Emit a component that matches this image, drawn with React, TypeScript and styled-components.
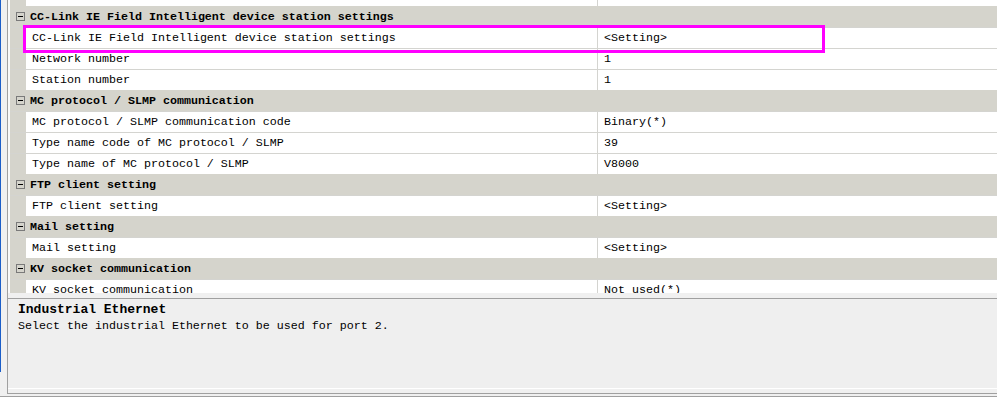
import React from 'react'
import styled, { createGlobalStyle } from 'styled-components'

const GlobalStyle = createGlobalStyle`
  html, body {
    margin: 0;
    padding: 0;
    background: #f0f0f0;
    overflow: hidden;
  }
  #root {
    width: 997px;
    height: 397px;
  }
`

const mono = `'Liberation Mono', 'Courier New', monospace`

const Page = styled.div`
  display: flex;
  width: 997px;
  height: 396px;
  border-bottom: 1px solid #a0a0a0;
  background: #f0f0f0;
  font-family: ${mono};
  font-size: 11.67px;
  color: #000;
`

const SideEdge = styled.div`
  width: 7px;
  flex: none;
  display: flex;
  flex-direction: column;
`

const BlueRail = styled.div`
  width: 1px;
  height: 372px;
  background: #1a5dc8;
`

const Frame = styled.div`
  flex: 1;
  display: flex;
  flex-direction: column;
  height: 391px;
  border-left: 1px solid #a0a0a0;
  border-bottom: 1px solid #a0a0a0;
  padding-bottom: 2px;
  box-sizing: content-box;
`

const GridPane = styled.div`
  position: relative;
  height: 293px;
  flex: none;
  overflow: hidden;
  border-left: 2px solid #fafafa;
  background: #fff;
`

const CategoryRow = styled.div`
  display: flex;
  align-items: center;
  height: 21px;
  background: #d5d4cc;
  font-weight: bold;
`

const Toggle = styled.span`
  width: 7px;
  height: 7px;
  margin: 0 5px 0 6px;
  border: 1px solid #7a7a7a;
  position: relative;
  flex: none;

  &::after {
    content: '';
    position: absolute;
    left: 1px;
    right: 1px;
    top: 3px;
    height: 1px;
    background: #000;
  }
`

const ItemRow = styled.div<{ $clip?: number }>`
  display: flex;
  height: 20px;
  border-top: 1px solid #d4d4d0;
  background: #d5d4cc;
  margin-top: ${(p) => (p.$clip ? `-${p.$clip}px` : '0')};
`

const Indent = styled.div`
  width: 16px;
  flex: none;
`

const NameCell = styled.div`
  width: 565px;
  flex: none;
  padding-left: 6px;
  background: #fff;
  border-right: 1px solid #d4d4d0;
  line-height: 20px;
  white-space: pre;
`

const ValueCell = styled.div`
  flex: 1;
  padding-left: 6px;
  background: #fff;
  line-height: 20px;
  white-space: pre;
`

const Highlight = styled.div`
  position: absolute;
  left: 13px;
  top: 25px;
  width: 802px;
  height: 28px;
  box-sizing: border-box;
  border: 3px solid #ff00ff;
  pointer-events: none;
`

const Splitter = styled.div`
  height: 5px;
  flex: none;
  background: #f0f0f0;
  border-bottom: 1px solid #a0a0a0;
`

const HelpPanel = styled.div`
  height: 89px;
  flex: none;
  padding-left: 10px;
  background: #efefef;
  border-bottom: 1px solid #fff;
`

const HelpTitle = styled.div`
  font-size: 13px;
  font-weight: bold;
  line-height: 19px;
  padding-top: 1px;
`

const HelpText = styled.div`
  line-height: 15px;
  white-space: pre;
`

type Item = { name: string; value: string }
type Group = { title: string; items: Item[] }

const groups: Group[] = [
  {
    title: 'CC-Link IE Field Intelligent device station settings',
    items: [
      { name: 'CC-Link IE Field Intelligent device station settings', value: '<Setting>' },
      { name: 'Network number', value: '1' },
      { name: 'Station number', value: '1' },
    ],
  },
  {
    title: 'MC protocol / SLMP communication',
    items: [
      { name: 'MC protocol / SLMP communication code', value: 'Binary(*)' },
      { name: 'Type name code of MC protocol / SLMP', value: '39' },
      { name: 'Type name of MC protocol / SLMP', value: 'V8000' },
    ],
  },
  {
    title: 'FTP client setting',
    items: [{ name: 'FTP client setting', value: '<Setting>' }],
  },
  {
    title: 'Mail setting',
    items: [{ name: 'Mail setting', value: '<Setting>' }],
  },
  {
    title: 'KV socket communication',
    items: [{ name: 'KV socket communication', value: 'Not used(*)' }],
  },
]

const PropertyRow = ({ item, clip }: { item: Item; clip?: number }) => (
  <ItemRow $clip={clip}>
    <Indent />
    <NameCell>{item.name}</NameCell>
    <ValueCell>{item.value}</ValueCell>
  </ItemRow>
)

export default function App() {
  return (
    <>
      <GlobalStyle />
      <Page>
        <SideEdge>
          <BlueRail />
        </SideEdge>
        <Frame>
          <GridPane>
            {/* row scrolled mostly out of view above */}
            <PropertyRow item={{ name: '', value: '' }} clip={15} />
            {groups.map((g) => (
              <React.Fragment key={g.title}>
                <CategoryRow>
                  <Toggle />
                  {g.title}
                </CategoryRow>
                {g.items.map((it) => (
                  <PropertyRow key={it.name} item={it} />
                ))}
              </React.Fragment>
            ))}
            <Highlight />
          </GridPane>
          <Splitter />
          <HelpPanel>
            <HelpTitle>Industrial Ethernet</HelpTitle>
            <HelpText>Select the industrial Ethernet to be used for port 2.</HelpText>
          </HelpPanel>
        </Frame>
      </Page>
    </>
  )
}
